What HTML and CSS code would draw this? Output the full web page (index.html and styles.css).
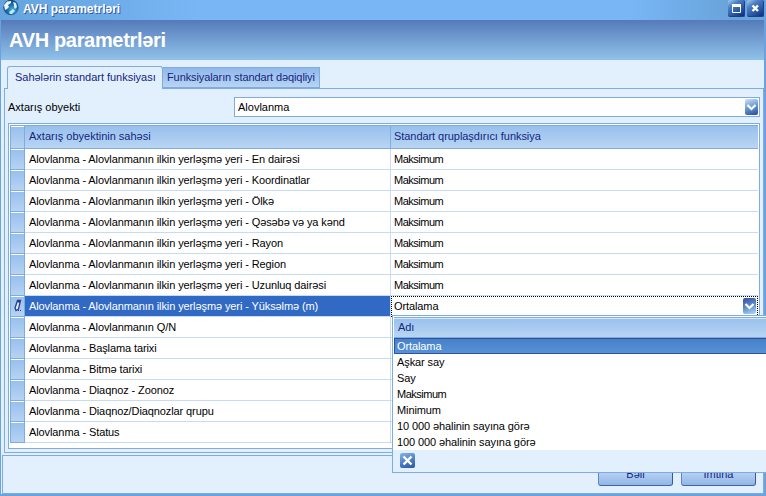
FILE: index.html
```html
<!DOCTYPE html>
<html lang="az">
<head>
<meta charset="utf-8">
<title>AVH parametrləri</title>
<link rel="stylesheet" href="styles.css">
</head>
<body>
<div class="window">
  <header class="titlebar">
    <svg class="globe" width="17" height="17" viewBox="0 0 17 17"><defs><radialGradient id="g" cx=".6" cy=".65" r=".7"><stop offset="0" stop-color="#4cb4d8"/><stop offset=".5" stop-color="#1d6aa6"/><stop offset="1" stop-color="#123d78"/></radialGradient></defs><circle cx="8" cy="8.5" r="7.7" fill="url(#g)"/><path d="M1 6L4 2.5L8 2L8 4L5 6L6 8L4 10L2 11Z" fill="#e8f6fb"/><path d="M10 3L13 4L14 8L12 10L11 8L11 6Z" fill="#d5eef8"/><path d="M6 13L10 10L12 12L9 15L7 15Z" fill="#bfe9f5"/></svg>
    <span class="caption">AVH parametrləri</span>
    <span class="winbtn"><svg width="17" height="16" viewBox="0 0 17 16"><path d="M4.5 4.5H12.5V12.5H4.5Z" fill="none" stroke="#fff"/><path d="M4 5.5H13" stroke="#fff" stroke-width="3"/></svg></span>
    <span class="winbtn"><svg width="17" height="16" viewBox="0 0 17 16"><path d="M5.5 5.5L11 11M11 5.5L5.5 11" stroke="#fff" stroke-width="2.4"/></svg></span>
  </header>
  <div class="banner">AVH parametrləri</div>
  <main class="body">
    <nav class="tabs">
      <div class="tab active">Sahələrin standart funksiyası</div>
      <div class="tab">Funksiyaların standart dəqiqliyi</div>
    </nav>
    <section class="panel">
      <div class="field"><label>Axtarış obyekti</label>
        <div class="combo"><span>Alovlanma</span><i class="drop light"><svg width="13" height="16" viewBox="0 0 13 16"><path d="M2.5 6L6.5 10L10.5 6" fill="none" stroke="#fff" stroke-width="2.2"/></svg></i></div>
      </div>
      <div class="grid">
        <div class="inner">
          <div class="row head"><b class="ind"></b><span class="c1">Axtarış obyektinin sahəsi</span><span class="c2">Standart qruplaşdırıcı funksiya</span></div>
          <div class="row"><b class="ind"></b><span class="c1">Alovlanma - Alovlanmanın ilkin yerləşmə yeri - En dairəsi</span><span class="c2 func">Maksimum</span></div>
          <div class="row"><b class="ind"></b><span class="c1">Alovlanma - Alovlanmanın ilkin yerləşmə yeri - Koordinatlar</span><span class="c2 func">Maksimum</span></div>
          <div class="row"><b class="ind"></b><span class="c1">Alovlanma - Alovlanmanın ilkin yerləşmə yeri - Ölkə</span><span class="c2 func">Maksimum</span></div>
          <div class="row"><b class="ind"></b><span class="c1">Alovlanma - Alovlanmanın ilkin yerləşmə yeri - Qəsəbə və ya kənd</span><span class="c2 func">Maksimum</span></div>
          <div class="row"><b class="ind"></b><span class="c1">Alovlanma - Alovlanmanın ilkin yerləşmə yeri - Rayon</span><span class="c2 func">Maksimum</span></div>
          <div class="row"><b class="ind"></b><span class="c1">Alovlanma - Alovlanmanın ilkin yerləşmə yeri - Region</span><span class="c2 func">Maksimum</span></div>
          <div class="row"><b class="ind"></b><span class="c1">Alovlanma - Alovlanmanın ilkin yerləşmə yeri - Uzunluq dairəsi</span><span class="c2 func">Maksimum</span></div>
          <div class="row selected"><b class="ind"><svg width="14" height="20" viewBox="0 0 14 20"><path d="M6.5 4.5H9.5L7.5 13L5 14.5L4 12Z" fill="#dceaf9" stroke="#253f8e" stroke-width="1.3"/><path d="M6.5 5L9 6" stroke="#253f8e" stroke-width="2"/><path d="M7 14.5H8M9 14.5H10" stroke="#253f8e"/></svg></b><span class="c1">Alovlanma - Alovlanmanın ilkin yerləşmə yeri - Yüksəlmə (m)</span><span class="c2 editing">Ortalama<i class="drop dark"><svg width="13" height="16" viewBox="0 0 13 16"><path d="M2.5 6L6.5 10L10.5 6" fill="none" stroke="#fff" stroke-width="2.2"/></svg></i></span></div>
          <div class="row"><b class="ind"></b><span class="c1">Alovlanma - Alovlanmanın Q/N</span><span class="c2"></span></div>
          <div class="row"><b class="ind"></b><span class="c1">Alovlanma - Başlama tarixi</span><span class="c2"></span></div>
          <div class="row"><b class="ind"></b><span class="c1">Alovlanma - Bitmə tarixi</span><span class="c2"></span></div>
          <div class="row"><b class="ind"></b><span class="c1">Alovlanma - Diaqnoz - Zoonoz</span><span class="c2"></span></div>
          <div class="row"><b class="ind"></b><span class="c1">Alovlanma - Diaqnoz/Diaqnozlar qrupu</span><span class="c2"></span></div>
          <div class="row"><b class="ind"></b><span class="c1">Alovlanma - Status</span><span class="c2"></span></div>
        </div>
      </div>
    </section>
  </main>
  <footer class="actions"><button>Bəli</button><button>İmtina</button></footer>
</div>
<div class="popup">
  <div class="pop-head">Adı</div>
  <ul>
    <li class="on">Ortalama</li>
    <li>Aşkar say</li>
    <li>Say</li>
    <li class="func">Maksimum</li>
    <li>Minimum</li>
    <li>10 000 əhalinin sayına görə</li>
    <li>100 000 əhalinin sayına görə</li>
  </ul>
  <div class="pop-foot"><i class="clear"><svg width="15" height="15" viewBox="0 0 15 15"><path d="M3.5 3.5L11.5 11.5M11.5 3.5L3.5 11.5" stroke="#fff" stroke-width="2.4"/></svg></i></div>
</div>
</body>
</html>
```

FILE: styles.css
```css
* { box-sizing: border-box; }
body { margin: 0; width: 766px; height: 496px; overflow: hidden; font: 11px "Liberation Sans", Arial, sans-serif; letter-spacing: -0.1px; color: #000; position: relative; white-space: nowrap; }
svg { display: block; }
.window { width: 766px; height: 496px; display: flex; flex-direction: column; background: #e2f0fe; border: solid #6aa2df; border-width: 0 2px 2px 1px; }
.titlebar { height: 20px; flex: none; margin: 0 -2px 0 -1px; padding: 0 2px 0 3px; display: flex; background: linear-gradient(90deg, #66a4de 0, #6dabe7 12%, #78b6f5 26%, #78b6f5 82%, #68a3da 96%); }
.globe { flex: none; margin-top: -1px; }
.caption { flex: 1; padding-left: 3px; font-size: 12px; line-height: 18px; font-weight: bold; letter-spacing: 0; color: #fff; text-shadow: 1px 1px 0 #2e59a8; }
.winbtn { width: 17px; height: 17px; margin-left: 2px; border-radius: 2px; background: linear-gradient(145deg, #a8cff0 0, #4e80c4 30%, #1e4798 80%, #0c2975); border: solid #183f91; border-width: 0 1px 1px 0; }
.banner { height: 40px; flex: none; padding-left: 8px; line-height: 40px; font-size: 20px; font-weight: bold; letter-spacing: -0.33px; color: #fff; background: linear-gradient(#557bba, #90c2ea); }
.body { height: 395px; flex: none; padding: 6px 0 0 3px; }
.tabs { height: 22px; display: flex; padding-left: 3px; align-items: flex-end; color: #12267e; }
.tab { height: 21px; width: 157px; border: 1px solid #7fabe3; border-left: 0; padding-left: 4px; line-height: 19px; background: linear-gradient(#8fb8ea, #b9d4f3); }
.tab.active { width: 156px; height: 23px; margin-bottom: -1px; padding-left: 7px; border-left: 1px solid #7fabe3; border-bottom: 0; border-radius: 3px 3px 0 0; background: #e2f0fe; position: relative; line-height: 20px; letter-spacing: -0.02px; }
.panel { height: 365px; width: 760px; border: 1px solid #7fabe3; padding: 8px 3px 0; }
.field { display: flex; height: 20px; align-items: center; letter-spacing: 0; }
.field label { width: 226px; }
.combo { width: 526px; height: 20px; border: 1px solid #7fabe3; background: #fff; display: flex; justify-content: space-between; align-items: center; padding: 0 1px 0 3px; }
.drop { display: block; width: 13px; height: 16px; border-radius: 2px; }
.light { background: linear-gradient(160deg, #cfe4f8, #6f9fd8 45%, #234b9e); }
.dark { background: linear-gradient(160deg, #324f9e, #5f8ccb 50%, #b2dbf3); }
.grid { margin-top: 6px; width: 752px; height: 326px; border: 1px solid #7fabe3; background: #fff; padding: 1px 0 0 1px; }
.inner { width: 748px; border: solid #7fabe3; border-width: 1px 0 0 1px; }
.row { height: 21px; display: flex; line-height: 21px; }
.row > span { border-bottom: 1px solid #c6dbf5; }
.ind { width: 14px; border-right: 1px solid #7fabe3; border-bottom: 1px solid #7fabe3; background: linear-gradient(#fff 1px, #98c0ed 1px, #b7d3f2); }
.c1 { width: 366px; padding-left: 4px; border-right: 1px solid #c6dbf5; }
.c2 { flex: 1; padding-left: 3px; }
.func { letter-spacing: -0.5px; }
.head { height: 23px; color: #12267e; line-height: 21px; letter-spacing: 0; }
.head .c2 { letter-spacing: -0.06px; }
.head > span { background: linear-gradient(#98c0ed, #b9d5f3); border-color: #7fabe3; }
.selected .c1 { background: #316ac5; color: #fff; }
.selected .editing { border: 1px dotted #000; border-bottom: 0; padding: 0 1px 0 2px; display: flex; justify-content: space-between; line-height: 19px; }
.editing .drop { margin-top: 1px; }
.actions { margin: 0 0 0 1px; width: 762px; height: 39px; border: 1px solid #7fabe3; display: flex; justify-content: flex-end; gap: 8px; padding: 6px 7px 0; }
.actions button { width: 75px; height: 24px; border: 1px solid #6086c9; border-right-color: #3856a4; border-bottom: 1px solid #4162ad; border-radius: 3px; background: linear-gradient(#d4e6fa, #91b6e6); color: #12267e; font: inherit; padding: 0; }
.popup { position: absolute; left: 392px; top: 315px; width: 378px; height: 158px; border: 1px solid #7fabe3; background: #fff; padding: 1px 0 0 1px; }
.pop-head { height: 21px; border-top: 1px solid #7fabe3; border-bottom: 1px solid #7fabe3; box-shadow: inset 0 1px #d6e8fb; background: linear-gradient(#98c0ed, #b9d5f3); color: #12267e; padding-left: 4px; line-height: 18px; }
.popup ul { margin: 0; padding: 0; list-style: none; }
.popup li { height: 16px; line-height: 16px; padding-left: 3px; }
.popup .on { color: #fff; background: linear-gradient(#4781c8, #5692d9); border: 1px solid #354f9f; line-height: 14px; padding-left: 2px; }
.pop-foot { height: 22px; margin-left: -1px; background: #e2f0fe; padding: 3px 0 0 7px; }
.clear { display: block; width: 15px; height: 15px; border-radius: 2px; background: linear-gradient(160deg, #86b5e5, #4679c0 60%, #2c56a5); }
```
